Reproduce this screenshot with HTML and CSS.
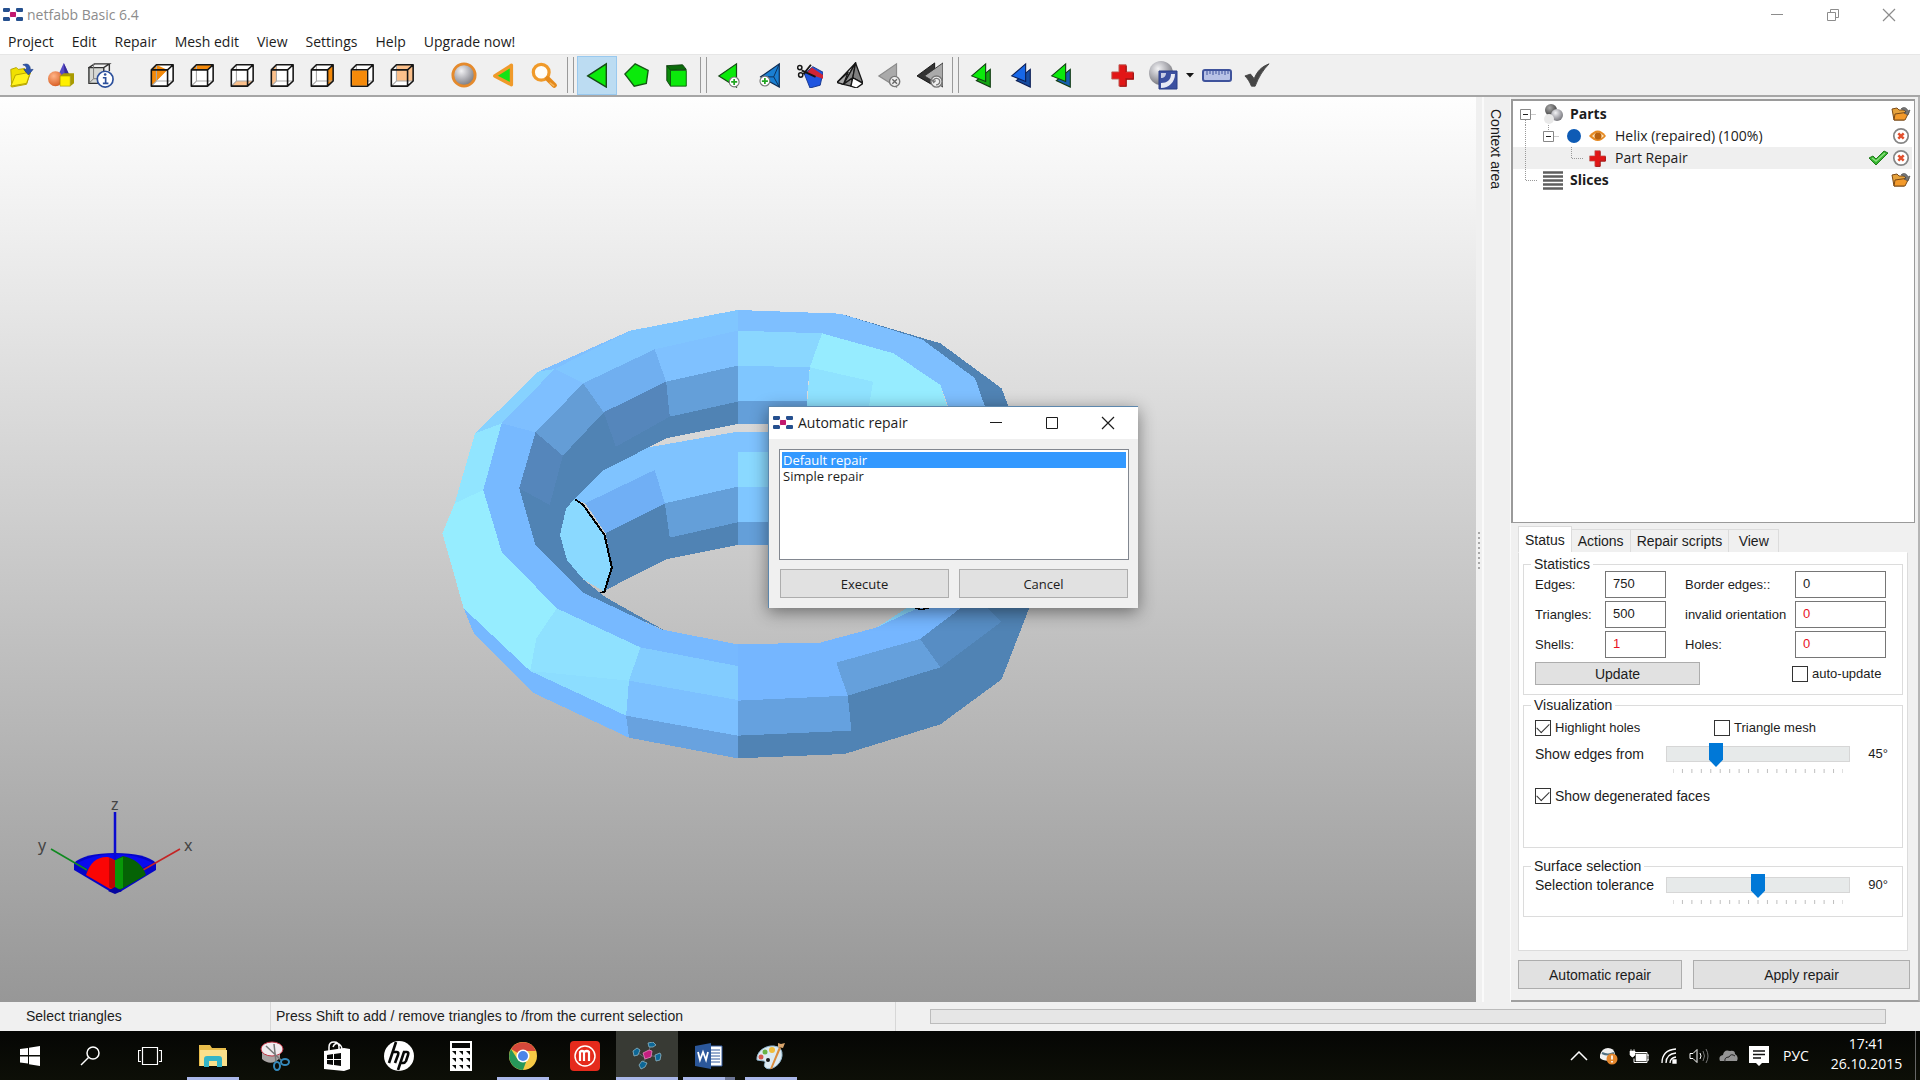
FILE: index.html
```html
<!DOCTYPE html>
<html lang="en">
<head>
<meta charset="utf-8">
<title>netfabb Basic 6.4</title>
<link rel="stylesheet" href="styles.css">
</head>
<body>
<svg class="defs" aria-hidden="true">
  <defs>
    <radialGradient id="grey-ball" cx=".38" cy=".32" r=".7"><stop offset="0" stop-color="#f2f2f4"/><stop offset=".5" stop-color="#b4b4ba"/><stop offset="1" stop-color="#77777c"/></radialGradient>
    <radialGradient id="dark-ball" cx=".38" cy=".32" r=".7"><stop offset="0" stop-color="#aaa"/><stop offset="1" stop-color="#3c3c3c"/></radialGradient>
    <radialGradient id="orange-ball" cx=".38" cy=".32" r=".7"><stop offset="0" stop-color="#ffb487"/><stop offset="1" stop-color="#d95f25"/></radialGradient>
    <symbol id="logo" viewBox="0 0 20 14"><g fill="#25508f"><rect x="0" y="0" width="7" height="4" rx="1"/><rect x="13" y="0" width="7" height="4" rx="1"/><rect x="0" y="9" width="7" height="4" rx="1"/><rect x="13" y="9" width="7" height="4" rx="1"/></g><path d="M6 3l8 7M14 3l-8 7" stroke="#d9a0c4"/><rect x="7" y="4" width="6" height="5" rx="1" fill="#c2186f"/></symbol>
    <symbol id="cube" viewBox="0 0 28 28"><path d="M8 3v17.500h18M8 20.500L2.500 26" fill="none" stroke="#a9a9a9" stroke-width="1.200"/><path d="M2.500 8.500h17.500V26H2.500zM2.500 8.500L8 3h18l-6 5.500M26 3v17.500L20 26" fill="none" stroke="#161616" stroke-width="1.700" stroke-linejoin="round"/></symbol>
    <symbol id="cross" viewBox="0 0 26 26"><path d="M9 1h8v8h8v8h-8v8H9v-8H1V9h8z" fill="#e21616" stroke="#b96058" stroke-width="1"/><path d="M17 2v7M25 10v7h-8v8H10" fill="none" stroke="#a50c0c" stroke-width="1.500"/></symbol>
    <symbol id="plus-badge" viewBox="0 0 14 14"><circle cx="7" cy="7" r="5.700" fill="#fff" stroke="#777" stroke-width="1.300"/><path d="M7 3.500v7M3.500 7h7" stroke="#20a520" stroke-width="2"/></symbol>
    <symbol id="folder-open" viewBox="0 0 20 16"><path d="M1 3l5-1 2 2h6l1 3-2 7H3z" fill="#e6a23c" stroke="#7b4a16"/><path d="M4 8l14-2-4 8H3z" fill="#f39a2b" stroke="#7b4a16"/><path d="M10 3c3-3 6-1 7 2l2-1-2 5-4-2 2-1c-1-2-2-2-5-3" fill="#777" stroke="#444" stroke-width=".6"/></symbol>
    <symbol id="remove" viewBox="0 0 18 18"><circle cx="9" cy="9" r="7.200" fill="#fff" stroke="#858585" stroke-width="1.700"/><path d="M6.300 6.300l5.400 5.400M11.700 6.300l-5.400 5.400" stroke="#e2502e" stroke-width="2.500"/></symbol>
    <symbol id="ticks" viewBox="0 0 180 4" preserveAspectRatio="none"><path d="M0 0v4M10 0v4M20 0v4M30 0v4M40 0v4M50 0v4M60 0v4M70 0v4M80 0v4M90 0v4M100 0v4M110 0v4M120 0v4M130 0v4M140 0v4M150 0v4M160 0v4M170 0v4M180 0v4" stroke="#bdbdbd"/></symbol>
    <symbol id="min" viewBox="0 0 14 14"><path d="M1 6.500h12" stroke="currentColor"/></symbol>
    <symbol id="close" viewBox="0 0 14 14"><path d="M1 1l12 12M13 1L1 13" stroke="currentColor" stroke-width="1.200"/></symbol>
  </defs>
</svg>

<header class="titlebar">
  <svg class="logo" width="20" height="14"><use href="#logo"/></svg>
  <h1>netfabb Basic 6.4</h1>
  <div class="window-buttons">
    <button aria-label="Minimize"><svg width="14" height="14"><use href="#min"/></svg></button>
    <button aria-label="Restore"><svg width="14" height="14" viewBox="0 0 14 14" fill="none" stroke="currentColor"><path d="M1.500 4.500h8v8h-8zM4.500 4v-2.500h8v8H10"/></svg></button>
    <button aria-label="Close"><svg width="14" height="14"><use href="#close"/></svg></button>
  </div>
</header>

<nav class="menubar">
  <button>Project</button><button>Edit</button><button>Repair</button><button>Mesh edit</button><button>View</button><button>Settings</button><button>Help</button><button>Upgrade now!</button>
</nav>

<div class="toolbar" role="toolbar" aria-label="Tools">
  <div class="tools">
    <button aria-label="Open project"><svg viewBox="0 0 28 28"><path d="M3 8l6-2 2 2 7-1 1 4 5 1-4 12-16 3z" fill="#f0e000" stroke="#b3a100"/><path d="M3 26l5-12 16-3-4 12z" fill="#fff31c" stroke="#b3a100"/><path d="M16 3c5-2 8 0 8 5h3l-5 6-5-6h3c0-3-1-4-4-5" fill="#2c55b0" stroke="#1c3a80" stroke-width=".7"/></svg></button>
    <button aria-label="Add part"><svg viewBox="0 0 28 28"><path d="M17 1l6 13H11z" fill="#574bc7"/><path d="M17 1l6 13h-5z" fill="#3a2d98"/><circle cx="8" cy="18" r="8" fill="url(#orange-ball)"/><path d="M13 15h11v11H13z" fill="#fff000" stroke="#8e8400" stroke-width=".6"/><path d="M13 15l4-3h11l-4 3zM24 26l4-3V12l-4 3z" fill="#a99b00"/></svg></button>
    <button aria-label="Part information"><svg viewBox="0 0 28 28"><path d="M1 6h16v17H1z" fill="#d6d8d4"/><path d="M1 6l6-4h16l-6 4zM1 6h16v17H1zM23 2v8" fill="none" stroke="#333" stroke-width="1.500"/><path d="M6 2v16L1 23M6 18h9" fill="none" stroke="#777"/><circle cx="18.500" cy="18.500" r="8.500" fill="#fff" stroke="#2b4f9b" stroke-width="1.800"/><path d="M16 17h3v6M16 23h6" fill="none" stroke="#2b4f9b" stroke-width="1.800"/><circle cx="18.500" cy="13.500" r="1.400" fill="#2b4f9b"/></svg></button>
  </div>
  <div class="tools">
    <button aria-label="Isometric view"><svg viewBox="0 0 28 28"><path d="M8 3h18l-6 5.500h0L2.500 26V8.500z" fill="#f58a0a"/><path d="M8 3h18l-6 5.500z" fill="#fff"/><path d="M26 3v17.500L20 26H3L20 8.500z" fill="#fff"/><use href="#cube"/></svg></button>
    <button aria-label="Top view"><svg viewBox="0 0 28 28"><path d="M2.500 8.500h17.500L26 3v17.500L20 26H2.500z" fill="#fff"/><path d="M2.500 8.500L8 3h18l-6 5.500z" fill="#f58a0a"/><use href="#cube"/></svg></button>
    <button aria-label="Bottom view"><svg viewBox="0 0 28 28"><path d="M2.500 8.500L8 3h18v17.500L20 26H2.500z" fill="#fff"/><path d="M2.500 26L8 20.500h18L20 26z" fill="#fbc08b"/><use href="#cube"/></svg></button>
    <button aria-label="Left view"><svg viewBox="0 0 28 28"><path d="M2.500 8.500L8 3h18v17.500L20 26H2.500z" fill="#fff"/><path d="M2.500 8.500L8 3v17.500L2.500 26z" fill="#fbc08b"/><use href="#cube"/></svg></button>
    <button aria-label="Right view"><svg viewBox="0 0 28 28"><path d="M2.500 8.500L8 3h18v17.500L20 26H2.500z" fill="#fff"/><path d="M20 8.500L26 3v17.500L20 26z" fill="#f58a0a"/><use href="#cube"/></svg></button>
    <button aria-label="Front view"><svg viewBox="0 0 28 28"><path d="M2.500 8.500L8 3h18v17.500L20 26H2.500z" fill="#fff"/><use href="#cube"/><path d="M3.300 9.300h16v16h-16z" fill="#f58a0a"/></svg></button>
    <button aria-label="Back view"><svg viewBox="0 0 28 28"><path d="M2.500 8.500L8 3h18v17.500L20 26H2.500z" fill="#fff"/><path d="M8 3h18v17.500H8z" fill="#fbc08b"/><use href="#cube"/></svg></button>
  </div>
  <div class="tools wide-gap">
    <button aria-label="Zoom to all"><svg viewBox="0 0 28 28"><circle cx="14" cy="14" r="12" fill="url(#grey-ball)" stroke="#e58a2c" stroke-width="3"/></svg></button>
    <button aria-label="Zoom to selection"><svg viewBox="0 0 28 28"><path d="M4 15L22 3.500v21z" fill="#15e315" stroke="#f09a2a" stroke-width="3.600" stroke-linejoin="round"/></svg></button>
    <button aria-label="Zoom"><svg viewBox="0 0 28 28"><circle cx="11" cy="11" r="8.500" fill="#fffdf8" stroke="#f09a2a" stroke-width="3.500"/><path d="M18 18l7 7" stroke="#e58a1c" stroke-width="5.500" stroke-linecap="round"/><path d="M20 22l5 4" stroke="#f6b65c" stroke-width="1.500"/></svg></button>
  </div>
  <div class="separator"></div>
  <div class="tools">
    <button class="pressed" aria-pressed="true" aria-label="Select triangles"><svg viewBox="0 0 28 28"><path d="M4 15L24 2v25z" fill="#0bea0b" stroke="#164b16" stroke-width="1.500"/></svg></button>
    <button aria-label="Select surfaces"><svg viewBox="0 0 28 28"><path d="M12 2l14 7-2 14-13 3L1 13z" fill="#0bea0b" stroke="#145814" stroke-width="1.500"/></svg></button>
    <button aria-label="Select shells"><svg viewBox="0 0 28 28"><path d="M3 4l17-1 4 5-17 1z" fill="#0a6b0a" stroke="#0d420d"/><path d="M3 4l4 5v17l-4-6z" fill="#0a8a0a" stroke="#0d420d"/><path d="M7 9h17v17H7z" fill="#0bea0b" stroke="#0d5a0d"/></svg></button>
  </div>
  <div class="separator"></div>
  <div class="tools">
    <button aria-label="Add triangle"><svg viewBox="0 0 28 28"><path d="M2 15L21 2v25z" fill="#0bea0b" stroke="#164b16" stroke-width="1.300"/><use href="#plus-badge" x="12" y="15" width="13" height="13"/></svg></button>
    <button aria-label="Add node"><svg viewBox="0 0 28 28"><path d="M4 16L24 2v25z" fill="#1a7fd2" stroke="#0d2d55" stroke-width="1.300"/><path d="M24 2l-6 14 6 11M4 16h14" fill="none" stroke="#0d2d55"/><use href="#plus-badge" x="2" y="14" width="13" height="13"/></svg></button>
    <button aria-label="Cut surface"><svg viewBox="0 0 28 28"><path d="M8 13l9-8 11 6-3 14-11 3z" fill="#1f55e0" stroke="#15348a"/><path d="M10 12l6-6 12 8v4z" fill="#cf2436"/><path d="M5 9l15 7M7 13l8-10" stroke="#161616" stroke-width="2"/><circle cx="3" cy="6" r="2.300" fill="none" stroke="#161616" stroke-width="1.600"/><circle cx="4" cy="14" r="2.300" fill="none" stroke="#161616" stroke-width="1.600"/></svg></button>
    <button aria-label="Triangle mesh"><svg viewBox="0 0 28 28"><g stroke="#161616" stroke-width="1.400" stroke-linejoin="round"><path d="M20 1L0 22l7 2z" fill="#ddd"/><path d="M20 1L7 24l10-7z" fill="#8a8a8a"/><path d="M20 1l8 22-11-6z" fill="#808080"/><path d="M0 22l12-11-5 13z" fill="#aaa"/><path d="M7 24l10-7-2 9z" fill="#888"/><path d="M15 26l2-9 11 6-7 5z" fill="#fff"/></g></svg></button>
    <button aria-label="Remove triangles"><svg viewBox="0 0 28 28"><path d="M2 15L21 2v25z" fill="#aaa" stroke="#8b8b8b" stroke-width="1.300"/><circle cx="19" cy="21" r="5.500" fill="#eee" stroke="#777" stroke-width="1.500"/><path d="M16.500 18.500l5 5M21.500 18.500l-5 5" stroke="#666" stroke-width="1.500"/></svg></button>
    <button aria-label="Flip triangles"><svg viewBox="0 0 28 28"><path d="M0 15L19 1v25z" fill="#333" stroke="#111"/><path d="M8 15L28 1v26z" fill="#aaa" stroke="#333"/><circle cx="21" cy="21" r="6" fill="#eee" stroke="#777" stroke-width="1.500"/><path d="M17.500 21a3.500 3.500 0 1 1 3 3.500M16 19l2 3 2-2" fill="none" stroke="#777" stroke-width="1.400"/></svg></button>
  </div>
  <div class="separator tight"></div>
  <div class="tools">
    <button aria-label="Select all"><svg viewBox="0 0 28 28"><g stroke="#123c12" stroke-width="1.200"><path d="M9 20L24 8v19z" fill="#13a613"/><path d="M4 15L19 2v19z" fill="#0bea0b"/></g></svg></button>
    <button aria-label="Invert selection"><svg viewBox="0 0 28 28"><g stroke="#0c1e55" stroke-width="1.200"><path d="M9 20L24 8v19z" fill="#174ca0"/><path d="M4 15L19 2v19z" fill="#1767e8"/></g></svg></button>
    <button aria-label="Toggle selection"><svg viewBox="0 0 28 28"><g stroke="#123c12" stroke-width="1.200"><path d="M9 20L24 8v19z" fill="#165fae"/><path d="M4 15L19 2v19z" fill="#0bea0b"/></g></svg></button>
  </div>
  <div class="tools wide-gap">
    <button aria-label="Repair part"><svg viewBox="0 0 28 28"><use href="#cross" x="1" y="2" width="25" height="25"/></svg></button>
    <button aria-label="Cut part"><svg viewBox="0 0 30 30" class="large"><circle cx="13" cy="13" r="12" fill="url(#grey-ball)"/><path d="M11 11h18v18H11z" fill="#3c50a0" stroke="#293c87"/><path d="M13 28c8 0 14-6 14-14h-4c0 6-4 9-10 9z" fill="#e7e9f4"/><path d="M13 13h5c0 3-2 5-5 5z" fill="#c8cde4"/></svg></button>
    <button class="caret" aria-label="Cut options"><svg viewBox="0 0 10 6"><path d="M1 1h8L5 5.500z" fill="#151515"/></svg></button>
    <button aria-label="Measure"><svg viewBox="0 0 30 28" class="large"><rect x="1" y="9" width="28" height="11" rx="2" fill="#b8c2e6" stroke="#3f539c" stroke-width="2"/><path d="M5 10v4M8 10v3M11 10v4M14 10v3M17 10v4M20 10v3M23 10v4M26 10v3" stroke="#3f539c"/></svg></button>
    <button aria-label="Accept"><svg viewBox="0 0 28 28"><path d="M1 15l6-2 4 5C14 10 19 5 27 2 20 9 16 16 12 26H8C6 21 4 18 1 15z" fill="#464646" stroke="#464646" stroke-linejoin="round"/></svg></button>
  </div>
</div>

<main class="workspace">
  <section class="viewport" aria-label="3D view">
    <svg class="model" viewBox="0 0 1568 1470" preserveAspectRatio="none" shape-rendering="crispEdges">
      <!-- lower turn, seen through the ring -->
      <g fill="#7fc3ff"><path d="M447 543L560 472L778 425H870V487H778L575 540L405 640L378 628z"/><path d="M575 540L778 487V590L600 640z"/></g>
      <path d="M778 487h92v103h-92z" fill="#8ad9ff"/><path d="M778 590h92v107h-92z" fill="#7fc6ff"/><path d="M778 697h92v68h-92z" fill="#649fd9"/>
      <path d="M405 640L575 540L600 640L455 730z" fill="#70aff5"/>
      <path d="M600 640L778 590V697L612 743z" fill="#649fd9"/>
      <path d="M455 730L600 640L612 743L778 697V765L603 808L455 900L470 832z" fill="#5083b4"/>
      <!-- inner wall of the upper turn -->
      <path d="M283 427L350 497L450 367L603 275L612 380L778 335V402L603 445L447 543L378 628L358 655L343 735L360 810L400 868L455 922L600 1022L400 912L280 770L240 595z" fill="#5083b4"/>
      <path d="M450 367L603 275L612 380L480 470zM350 497L318 645L243 595L283 427z" fill="#5586bb"/>
      <path d="M283 427L400 280L450 367L350 497z" fill="#649dd6"/>
      <path d="M400 280L575 178L603 275L450 367z" fill="#70aff0"/>
      <path d="M575 178L778 122V227L603 275z" fill="#7fc1ff"/>
      <path d="M603 275L778 227V335L612 380z" fill="#649fd9"/>
      <path d="M778 122L985 130L955 232L778 227z" fill="#8ad7ff"/>
      <path d="M778 227L955 232L947 334L778 332z" fill="#7fc6ff"/>
      <path d="M778 332L947 334L960 402H778z" fill="#649fd9"/>
      <path d="M985 130L1160 190L1275 285L1297 370H1097L1110 275L955 232z" fill="#96ecff"/>
      <path d="M955 232L1110 275L1097 370H947z" fill="#8fe2ff"/>
      <!-- crest of the upper turn -->
      <path d="M515 122L778 60L1030 71L1230 148L1360 265L1390 370H1300L1275 285L1160 190L985 130L778 122L575 178L400 280L283 427L243 595L283 765L400 908L590 1018L778 1063V1130L540 1074L335 957L200 787L155 600L200 400L290 245z" fill="#7ebfff"/>
      <path d="M200 400L283 427L243 595L283 765L400 908L590 1018L778 1063V1130L540 1074L335 957L200 787L155 600z" fill="#77b9ff"/>
      <path d="M515 122L778 60V122L575 178L400 280L330 237z" fill="#80c6ff"/>
      <path d="M1030 71L1275 160L1425 295L1448 370H1390L1360 265L1230 148z" fill="#5083b4"/>
      <!-- outer left wall -->
      <path d="M290 245L330 237L200 400L135 430z" fill="#86d2ff"/>
      <path d="M135 430L200 400L155 600L85 640z" fill="#91e5ff"/>
      <path d="M85 640L155 600L200 785L335 955L285 1045L270 1143L107 955L55 730z" fill="#96edff"/>
      <path d="M335 955L540 1072L512 1172L505 1277L270 1143L285 1045z" fill="#8cddff"/>
      <path d="M285 1045L335 955L540 1072L512 1172L270 1143z" fill="#91e4ff" opacity=".6"/>
      <path d="M540 1072L778 1128V1230L512 1172z" fill="#82ccff"/>
      <path d="M512 1172L778 1230V1337L505 1277z" fill="#7cc0ff"/>
      <path d="M505 1277L778 1337V1405L512 1343z" fill="#68a2df"/>
      <path d="M270 1143L505 1277L512 1343L280 1210zM107 955L270 1143L280 1210L132 1030z" fill="#76b8ff"/>
      <!-- lower right wall -->
      <path d="M1120 1012L1210 940H1260L1225 985z" fill="#8ad9ff"/>
      <path d="M778 1063L980 1058L1120 1012L1175 980L1245 940H1350L1225 1047L1020 1118L1048 1217L778 1232z" fill="#75b6ff"/>
      <path d="M1225 1047L1340 940H1380L1425 995L1275 1132z" fill="#578dc4"/>
      <path d="M1020 1118L1225 1047L1275 1132L1048 1217z" fill="#65a0dc"/>
      <path d="M1048 1217L1275 1132L1425 995L1380 940H1497L1425 1168L1275 1303L1040 1392L778 1405V1337L1057 1322z" fill="#5083b4"/>
      <path d="M778 1232L1048 1217L1057 1322L778 1337z" fill="#65a1df"/>
      <!-- open end with its highlighted border -->
      <path d="M378 628L400 645L452 735L470 832L452 905L400 868L360 810L343 735L358 655z" fill="#8ad9ff"/>
      <path d="M380 628L400 645L452 735L470 832L452 905L442 908" fill="none" stroke="#000" stroke-width="5"/>
      <path d="M1212 953L1228 959L1250 953" fill="none" stroke="#000" stroke-width="4"/>
    </svg>
    <svg class="axes" viewBox="0 0 300 130" width="300" height="130">
      <path d="M74 83Q84 73 115 73T156 83V90L120 112H111L74 90z" fill="#0505c8"/>
      <path d="M77 83Q95 74 115 74T153 83L125 96H100z" fill="#0a0aee"/>
      <path d="M51 69L87 90" stroke="#108a20" stroke-width="1.600"/><path d="M180 69L143 90" stroke="#c42424" stroke-width="1.600"/>
      <path d="M86 95Q92 76 108 77L115 80V109L110 109z" fill="#fa0505"/><path d="M109 78l6 2v30l-6-3z" fill="#bb0606"/>
      <path d="M115 80L123 76Q141 80 146 95L120 110L115 109z" fill="#056305"/><path d="M115 80l8-3v31l-8 2z" fill="#089808"/>
      <path d="M108 111l7-4 7 4-7 3z" fill="#0505a0"/>
      <path d="M115 32V80" stroke="#0b0bd0" stroke-width="2.500"/>
      <text x="111" y="30">z</text><text x="38" y="71">y</text><text x="184" y="71">x</text>
    </svg>

    <div class="dialog" role="dialog" aria-labelledby="dialog-title">
      <div class="dialog-title">
        <svg width="20" height="14"><use href="#logo"/></svg>
        <h2 id="dialog-title">Automatic repair</h2>
        <div class="window-buttons">
          <button aria-label="Minimize"><svg width="14" height="14"><use href="#min"/></svg></button>
          <button aria-label="Maximize"><svg width="14" height="14" viewBox="0 0 14 14"><path d="M1.500 1.500h11v11h-11z" fill="none" stroke="currentColor"/></svg></button>
          <button aria-label="Close"><svg width="14" height="14"><use href="#close"/></svg></button>
        </div>
      </div>
      <div class="dialog-body">
        <select size="6" aria-label="Repair script"><option class="chosen">Default repair</option><option>Simple repair</option></select>
        <div class="dialog-actions"><button class="push">Execute</button><button class="push">Cancel</button></div>
      </div>
    </div>
  </section>

  <div class="splitter"><svg width="4" height="38" viewBox="0 0 4 38"><path d="M2 1v37" stroke="#a8a8a8" stroke-width="2" stroke-dasharray="2 3"/></svg></div>
  <div class="context-strip"><span>Context area</span></div>

  <aside class="sidebar">
    <ul class="tree">
      <li class="node"><button class="guide" aria-label="Collapse Parts"><svg width="30" height="22" viewBox="0 0 30 22"><path d="M17.500 11.500h6M12.500 17v5" stroke="#999" stroke-dasharray="1 1"/><path d="M7.500 6.500h10v10h-10z" fill="#fff" stroke="#888"/><path d="M10 11.500h5" stroke="#222"/></svg></button>
        <svg class="kind" viewBox="0 0 20 20"><circle cx="8" cy="6" r="6" fill="url(#dark-ball)"/><circle cx="14" cy="11" r="6" fill="url(#grey-ball)"/><circle cx="6" cy="15" r="5" fill="#e9e9e9"/></svg>
        <strong>Parts</strong><button class="mini" aria-label="Open part"><svg width="20" height="16"><use href="#folder-open"/></svg></button></li>
      <li class="node"><button class="guide" aria-label="Collapse Helix"><svg width="52" height="22" viewBox="0 0 52 22"><path d="M12.500 0v22M40.500 11.500h6M35.500 0v6" stroke="#999" stroke-dasharray="1 1"/><path d="M30.500 6.500h10v10h-10z" fill="#fff" stroke="#888"/><path d="M33 11.500h5" stroke="#222"/></svg></button>
        <svg class="kind" viewBox="0 0 20 20"><circle cx="9" cy="10" r="7" fill="#0e5bb5"/></svg>
        <svg class="kind" viewBox="0 0 20 20"><path d="M1 10Q10-1 18 10Q10 20 1 10z" fill="#e68a22"/><path d="M4 10Q10 3 16 10Q10 16 4 10z" fill="#ffe3b8"/><circle cx="10" cy="10" r="3.500" fill="#b8620f"/></svg>
        <span>Helix (repaired) (100%)</span><button class="mini" aria-label="Remove Helix"><svg width="18" height="18"><use href="#remove"/></svg></button></li>
      <li class="node selected"><svg class="guide" width="75" height="22" viewBox="0 0 75 22"><path d="M12.500 0v22M58.500 0v11.500h12" fill="none" stroke="#999" stroke-dasharray="1 1"/></svg>
        <svg class="kind" viewBox="0 0 20 20"><use href="#cross" x="1" y="2" width="17" height="17"/></svg>
        <span>Part Repair</span><button class="mini" aria-label="Apply"><svg width="20" height="18" viewBox="0 0 20 18"><path d="M1 9l4-2 3 3 8-8 4 2L8 16z" fill="#35b52e" stroke="#217a1c"/><path d="M4 9l4 3 9-8" fill="none" stroke="#8be07f" stroke-width="1.500"/></svg></button><button class="mini close-up" aria-label="Cancel repair"><svg width="18" height="18"><use href="#remove"/></svg></button></li>
      <li class="node"><svg class="guide" width="30" height="22" viewBox="0 0 30 22"><path d="M12.500 0v11.500h12" fill="none" stroke="#999" stroke-dasharray="1 1"/></svg>
        <svg class="kind" viewBox="0 0 20 20"><path d="M0 2.500h20M0 6.500h20M0 10.500h20M0 14.500h20M0 18.500h20" stroke="#5e5e5e" stroke-width="2.500"/></svg>
        <strong>Slices</strong><button class="mini" aria-label="Open slices"><svg width="20" height="16"><use href="#folder-open"/></svg></button></li>
    </ul>

    <div class="panel">
      <div class="tabs" role="tablist">
        <button role="tab" aria-selected="true" class="tab active">Status</button><button role="tab" class="tab">Actions</button><button role="tab" class="tab">Repair scripts</button><button role="tab" class="tab">View</button>
      </div>
      <div class="page">
        <fieldset class="statistics"><legend>Statistics</legend>
          <div class="stats">
            <label for="edges">Edges:</label><input id="edges" value="750">
            <label class="second" for="border">Border edges::</label><input id="border" value="0">
            <label for="triangles">Triangles:</label><input id="triangles" value="500">
            <label class="second" for="invalid">invalid orientation</label><input id="invalid" class="alert" value="0">
            <label for="shells">Shells:</label><input id="shells" class="alert" value="1">
            <label class="second" for="holes">Holes:</label><input id="holes" class="alert" value="0">
          </div>
          <div class="update-row"><button class="push">Update</button><label class="check">
            <input type="checkbox">auto-update</label></div>
        </fieldset>
        <fieldset class="visualization"><legend>Visualization</legend>
          <div class="checks"><label class="check"><input type="checkbox" checked>Highlight holes</label><label class="check"><input type="checkbox">Triangle mesh</label></div>
          <div class="slider-row"><label for="angle">Show edges from</label><div class="slider"><input id="angle" type="range" min="0" max="180" value="45"><svg class="ticks"><use href="#ticks"/></svg></div><output for="angle">45°</output></div>
          <label class="check faces"><input type="checkbox" checked>Show degenerated faces</label>
        </fieldset>
        <fieldset class="surface"><legend>Surface selection</legend>
          <div class="slider-row"><label for="tolerance">Selection tolerance</label><div class="slider"><input id="tolerance" type="range" min="0" max="180" value="90"><svg class="ticks"><use href="#ticks"/></svg></div><output for="tolerance">90°</output></div>
        </fieldset>
      </div>
      <div class="panel-actions"><button class="push">Automatic repair</button><button class="push">Apply repair</button></div>
    </div>
  </aside>
</main>

<footer class="statusbar">
  <span class="mode">Select triangles</span><span class="hint">Press Shift to add / remove triangles to /from the current selection</span><div class="progress" role="progressbar"></div>
</footer>

<nav class="taskbar" aria-label="Taskbar">
  <button aria-label="Start"><svg width="20" height="20" viewBox="0 0 20 20"><path d="M0 3l8-1v7H0zM9 1.800L20 0v9H9zM0 10.500h8v7l-8-1zM9 10.500h11V20L9 18.200z" fill="#fff"/></svg></button>
  <button aria-label="Search"><svg width="20" height="20" viewBox="0 0 20 20"><circle cx="13" cy="7" r="6" fill="none" stroke="#fff" stroke-width="1.500"/><path d="M8.500 11.500L1 19" stroke="#fff" stroke-width="1.500"/></svg></button>
  <button aria-label="Task view"><svg width="24" height="18" viewBox="0 0 24 18"><path d="M4.500.500h15v17h-15zM3 3.500H.500v11H3M21 3.500h2.500v11H21" fill="none" stroke="#fff" stroke-width="1.200"/></svg></button>
  <div class="apps">
  <button class="app running" aria-label="File Explorer"><svg width="28" height="24" viewBox="0 0 28 24"><path d="M0 1h11l2 3h14v18H0z" fill="#e8bd4b"/><path d="M1 6h27v16H1z" fill="#fbe08b"/><path d="M5 23v-8q0-3 3-3h12q3 0 3 3v8h-5v-6h-8v6z" fill="#35b5c8"/></svg></button>
  <button class="app" aria-label="Snipping Tool"><svg width="30" height="30" viewBox="0 0 30 30"><path d="M2 9v9q9 8 18-1V9z" fill="#a9a4a4"/><ellipse cx="12" cy="8" rx="11" ry="7" fill="#f1ecef" stroke="#c23545" stroke-width="1"/><path d="M6 5l15 14M14 3l2 18" stroke="#777" stroke-width="1.500"/><ellipse cx="25" cy="21" rx="4" ry="3" fill="none" stroke="#3589bb" stroke-width="2"/><ellipse cx="17" cy="25" rx="3" ry="4" fill="none" stroke="#3589bb" stroke-width="2"/></svg></button>
  <button class="app" aria-label="Store"><svg width="28" height="30" viewBox="0 0 28 30"><path d="M6 10V6q0-5 5-5t5 5v4M10 6q2-5 6-3 3 2 3 6" fill="none" stroke="#fff" stroke-width="1.500"/><path d="M1 10l20-3 6 1v20l-6 2-20-2z" fill="#fff"/><path d="M4 14l6-1v5H4zM11 13l7-1v6h-7zM4 19h6v5l-6-1zM11 19h7v6l-7-1z" fill="#080908"/></svg></button>
  <button class="app" aria-label="HP"><svg width="30" height="30" viewBox="0 0 30 30"><circle cx="15" cy="15" r="15" fill="#fff"/><path d="M12 1L5 22M9 11h4q2 0 1 3l-3 8M20 11L14 29M19 11h4q2 0 1 3l-2 6q-1 2-3 2h-3" fill="none" stroke="#080908" stroke-width="2.600"/></svg></button>
  <button class="app" aria-label="Calculator"><svg width="22" height="30" viewBox="0 0 22 30"><path d="M0 0h22v30H0z" fill="#fff"/><path d="M2 2h18v5H2zM2 10h4v4zM9 10h4v4zM16 10h4v4zM2 17h4v4zM9 17h4v4zM16 17h4v4zM2 24h4v4zM9 24h4v4zM16 24h4v4z" fill="#080908"/></svg></button>
  <button class="app running" aria-label="Chrome"><svg width="28" height="28" viewBox="0 0 28 28"><circle cx="14" cy="14" r="14" fill="#f6c945"/><path d="M14 14L2 7a14 14 0 0 1 25 2H14z" fill="#d6493b"/><path d="M14 28A14 14 0 0 1 2 7l7 11 8 2z" fill="#27985a"/><circle cx="14" cy="14" r="6.500" fill="#fff"/><circle cx="14" cy="14" r="5" fill="#4c84e8"/></svg></button>
  <button class="app" aria-label="MakerBot"><svg width="30" height="30" viewBox="0 0 30 30"><rect width="30" height="30" rx="4" fill="#e52a1c"/><circle cx="15" cy="15" r="10" fill="none" stroke="#fff" stroke-width="1.500"/><path d="M10 20v-9q2-2 4 0v9m0-9q3-2 5 0v9" fill="none" stroke="#fff" stroke-width="2.200"/></svg></button>
  <button class="app running current" aria-label="netfabb"><svg width="30" height="28" viewBox="0 0 30 28"><path d="M5 10l8 6M25 15l-8-2M18 5l-1 5M11 21l2-5" stroke="#5f6a6d"/><g fill="#0d6796" stroke="#8eb5c4" stroke-width=".8"><path d="M16 1l5-1 3 3-3 2-4 0z"/><path d="M1 9l4-3 3 2-2 5-4 1z"/><path d="M23 13l5-2 1 2-1 5-4 1z"/><path d="M7 23l3-4 5 2-2 4-4 2z"/></g><path d="M11 11l6-3 3 1-1 6-6 2z" fill="#c51f80" stroke="#e58abf" stroke-width=".8"/></svg></button>
  <button class="app running grouped" aria-label="Word"><svg width="28" height="26" viewBox="0 0 28 26"><path d="M14 3h13v20H14z" fill="#fff" stroke="#335a9f"/><path d="M16 7h9M16 10h9M16 13h9M16 16h9M16 19h9" stroke="#335a9f"/><path d="M0 3l16-3v26L0 23z" fill="#2b579a"/><path d="M3 9l2 8 3-8 3 8 2-8" fill="none" stroke="#fff" stroke-width="1.800"/></svg></button>
  <button class="app running" aria-label="Paint"><svg width="30" height="28" viewBox="0 0 30 28"><path d="M1 18C0 10 9 3 18 4q9 1 8 10c-1 9-11 15-16 12-4-3 1-6-2-7z" fill="#dceaf3" stroke="#94b8ce"/><circle cx="5" cy="15" r="2.500" fill="#d65a4e"/><circle cx="9" cy="10" r="2.500" fill="#69b345"/><circle cx="16" cy="8" r="3" fill="#f0bd3c"/><circle cx="12" cy="18" r="2" fill="#171717"/><path d="M23 5l2 1-9 21-2 0z" fill="#d98b3d"/><path d="M22 5V1l3 1 4-1-2 5z" fill="#d8a56d"/></svg></button>
  </div>
  <div class="tray">
    <button aria-label="Show hidden icons"><svg width="18" height="10" viewBox="0 0 18 10"><path d="M1 9l8-8 8 8" fill="none" stroke="#fff" stroke-width="1.500"/></svg></button>
    <button aria-label="Security"><svg width="20" height="18" viewBox="0 0 20 18"><path d="M1 8q2-7 8-7t7 6l-2 6Q5 15 1 11z" fill="#f1f1f1"/><path d="M3 6q6 3 12 0" fill="none" stroke="#527080" stroke-width="2"/><circle cx="13" cy="12" r="5.500" fill="#e3862c"/><path d="M13 8.500v4M13 14v1.500" stroke="#fff" stroke-width="1.700"/></svg></button>
    <button aria-label="Battery"><svg width="20" height="14" viewBox="0 0 20 14"><path d="M5 3.500h13v10H5v-4M18 6h2v5h-2" fill="none" stroke="#fff"/><path d="M7 5h10v7H7zM1 2h5v4L4 8H3L1 6zM2 0v2M5 0v2" fill="#fff" stroke="#fff" stroke-width=".6"/></svg></button>
    <button aria-label="Network"><svg width="16" height="16" viewBox="0 0 16 16" fill="none" stroke="#fff" stroke-width="1.300"><path d="M1 15Q1 2 15 1M5 15Q5 6 15 5M9 15q0-5 6-6"/><path d="M12 12h3v3h-3z" fill="#fff"/></svg></button>
    <button aria-label="Volume"><svg width="20" height="16" viewBox="0 0 20 16" fill="none" stroke="#fff"><path d="M1 5.500h3l4-4v13l-4-4H1z"/><path d="M11 5q2 3 0 6"/><path d="M14 3q3 5 0 10M17 1q4 7 0 14" stroke="#777"/></svg></button>
    <button aria-label="OneDrive"><svg width="20" height="14" viewBox="0 0 20 14"><path d="M1 12Q-1 7 4 6q1-6 7-4 5-1 5 3 4 2 2 7z" fill="#949494"/><path d="M6 13q-1-5 4-5 2-4 6-1" fill="none" stroke="#222"/></svg></button>
    <button aria-label="Notifications"><svg width="20" height="20" viewBox="0 0 20 20"><path d="M0 0h20v17h-7l-3 3-3-3H0z" fill="#fff"/><path d="M4 5h12M4 8.500h12M4 12h8" stroke="#111" stroke-width="1.300"/></svg></button>
    <button class="language">РУС</button>
    <time datetime="2015-10-26T17:41">17:41<br>26.10.2015</time>
    <button class="show-desktop" aria-label="Show desktop"></button>
  </div>
</nav>
</body>
</html>
```
FILE: styles.css
```css
* { box-sizing: border-box; }
body {
  margin: 0;
  min-height: 100vh;
  display: flex;
  flex-direction: column;
  background: #f0f0f0;
  color: #1c1c1c;
  font: 14px/16px "Liberation Sans", Arial, sans-serif;
}
button, input, select { font: inherit; color: inherit; margin: 0; }
button { border: 0; padding: 0; background: none; }
svg { display: block; flex: none; }
h1, h2 { margin: 0; font-weight: 400; }
.defs { position: absolute; width: 0; height: 0; }

/* title and menus */
.titlebar, .menubar, .dialog { font-family: "Open Sans", "Noto Sans", sans-serif; }
.titlebar { display: flex; align-items: center; height: 30px; padding: 0 3px; background: #fff; color: #8c8c8c; }
.titlebar h1 { margin-left: 4px; font-size: 14px; line-height: 20px; }
.window-buttons { display: flex; margin-left: auto; }
.window-buttons button { width: 56px; height: 28px; display: grid; place-items: center; }
.menubar { display: flex; gap: 18px; height: 24px; padding: 0 8px; background: #fff; font-size: 14px; line-height: 22px; }

/* toolbar */
.toolbar { display: flex; align-items: center; height: 43px; padding-left: 1px; border-top: 1px solid #e6e6e6; border-bottom: 2px solid #a6a6a6; background: #f0f0f0; }
.tools { display: flex; }
.tools + .tools { margin-left: 21px; }
.tools + .wide-gap { margin-left: 22px; }
.tools button { width: 40px; height: 39px; display: grid; place-items: center; }
.tools svg { width: 26px; height: 26px; }
.tools svg.large { width: 30px; height: 30px; }
.tools .pressed { background: #bcdcf2; border: 1px solid #99c9ef; }
.tools .caret { width: 14px; }
.tools .caret svg { width: 10px; height: 6px; }
.separator { width: 7px; height: 36px; margin: 0 3px; border: solid #9a9a9a; border-width: 0 1px; }
.separator.tight { margin: 0 2px; }

/* work area */
.workspace { flex: 1; display: flex; }
.viewport { flex: 1; position: relative; min-width: 0; overflow: hidden; background: linear-gradient(#fefefe, #979797); }
.model { position: absolute; left: 420px; top: 193px; width: 640px; height: 490px; }
.axes { position: absolute; left: 0; bottom: 92px; }
.axes text { font: 16px "Noto Sans", sans-serif; fill: #444; }
.splitter { width: 8px; display: grid; place-items: center; border-right: 2px solid #fafafa; }
.context-strip { width: 27px; padding-top: 12px; border-right: 1px solid #fafafa; }
.context-strip span { display: block; margin-left: 4px; writing-mode: vertical-rl; }
.sidebar { width: 409px; display: flex; flex-direction: column; padding: 2px 3px 0 0; border-bottom: 2px solid #a0a0a0; border-right: 2px solid #b5b5b5; }

/* object tree */
.tree { flex: 1; margin: 0; padding: 2px 2px 0 0; list-style: none; background: #fff; border: 2px solid #9a9a9a; border-width: 2px 1px 1px 2px; font: 14px/22px "Open Sans", "Noto Sans", sans-serif; }
.node { display: flex; align-items: center; height: 22px; padding-right: 1px; }
.node.selected { background: #efefef; }
.node .kind { width: 20px; height: 20px; margin-right: 3px; }
.node strong, .node span { flex: 1; padding-left: 4px; font-weight: 400; }
.node strong { font-weight: 700; }
.mini { width: 20px; display: grid; place-items: center; }
.close-up { margin-left: 3px; }

/* tabbed panel */
.panel { padding: 3px 5px 11px 7px; }
.tabs { display: flex; align-items: flex-end; height: 26px; }
.tab { min-width: 50px; height: 23px; padding: 0 6px; border: 1px solid #dcdcdc; border-width: 1px 1px 0 0; white-space: nowrap; }
.tab.active { height: 26px; background: #fff; border-left-width: 1px; }
.page { height: 399px; margin-right: 2px; padding: 4px 4px; background: #fff; border: 1px solid #dcdcdc; border-top-color: #fff; }
fieldset { margin: 0; border: 1px solid #dcdcdc; min-width: 0; padding: 0 14px 0 11px; }
legend { margin-left: -4px; padding: 0 3px; height: 14px; line-height: 14px; }
.statistics { height: 138px; }
.visualization { height: 150px; margin-top: 3px; }
.surface { height: 58px; margin-top: 11px; }
.stats { display: grid; grid-template-columns: 70px 61px 129px 91px; row-gap: 3px; align-items: center; font-size: 13px; }
.stats .second { padding-left: 19px; white-space: nowrap; }
.stats input { width: 100%; height: 27px; padding: 0 7px 3px; border: 1px solid #767676; background: #fff; }
.stats .alert { color: #e81123; }
.update-row { display: flex; align-items: center; gap: 92px; margin-top: 4px; }
.update-row .push { width: 165px; height: 23px; }
.update-row .check { font-size: 13px; }
.push { background: #e1e1e1; border: 1px solid #adadad; }
.check { display: flex; align-items: center; gap: 4px; white-space: nowrap; }
.check input { appearance: none; width: 16px; height: 16px; border: 1px solid #333; background: #fff; display: grid; place-items: center; }
.check input:checked::before { content: ""; width: 11px; height: 6px; margin-bottom: 3px; border: solid #333; border-width: 0 0 1px 1px; rotate: -45deg; }
.checks { display: grid; grid-template-columns: 179px 1fr; padding-top: 8px; font-size: 13px; }
.slider-row { display: flex; align-items: flex-start; height: 34px; }
.slider-row label { width: 131px; padding-top: 4px; white-space: nowrap; }
.slider-row output { margin-left: auto; padding-top: 4px; font-size: 13px; }
.checks + .slider-row { margin-top: 6px; }
.slider { width: 184px; }
.slider input { appearance: none; display: block; width: 100%; height: 24px; background: none; }
.slider input::-webkit-slider-runnable-track { height: 16px; background: #e7eaea; border: 1px solid #d6d6d6; }
.slider input::-webkit-slider-thumb { appearance: none; width: 14px; height: 24px; margin-top: -4px; background: #0078d7; clip-path: polygon(0 0, 100% 0, 100% 70%, 50% 100%, 0 70%); }
.ticks { width: 170px; height: 4px; margin: 3px 0 0 7px; overflow: visible; }
.faces { margin-top: 12px; }
.panel-actions { display: grid; grid-template-columns: 164px 1fr; gap: 11px; margin-top: 9px; }
.panel-actions .push { height: 29px; }

/* repair dialog */
.dialog { position: absolute; left: 768px; top: 309px; width: 370px; background: #f0f0f0; border: 1px solid #5c87ad; border-width: 1px 0 0 1px; box-shadow: 0 4px 16px rgb(0 0 0 / 45%); }
.dialog-title { display: flex; align-items: center; height: 32px; padding: 0 2px 0 4px; background: #fff; }
.dialog-title h2 { margin-left: 5px; font-size: 14px; line-height: 20px; }
.dialog-body { padding: 10px 9px 10px 10px; font-size: 13px; }
.dialog select { display: block; width: 100%; height: 111px; padding: 2px; overflow: hidden; border: 1px solid #828790; border-radius: 0; background: #fff; outline: 0; }
.dialog option { height: 16px; min-height: 16px; padding: 0 1px; line-height: 16px; display: flex; align-items: center; }
.dialog option.chosen { background: #3399ff; color: #fff; }
.dialog-actions { display: grid; grid-template-columns: 1fr 1fr; gap: 10px; padding: 9px 1px 0; }
.dialog-actions .push { height: 29px; }

/* status line */
.statusbar { display: flex; align-items: center; height: 29px; padding-right: 34px; }
.mode { width: 271px; padding-left: 26px; border-right: 1px solid #d7d7d7; line-height: 29px; }
.hint { width: 625px; padding-left: 5px; border-right: 1px solid #d7d7d7; line-height: 29px; }
.progress { flex: 1; height: 15px; margin-left: 34px; background: #e6e6e6; border: 1px solid #bcbcbc; }

/* taskbar */
.taskbar { display: flex; height: 49px; background: linear-gradient(#050604, #0d0f07); color: #fff; }
.apps { display: flex; margin-left: 2px; }
.taskbar button { width: 60px; display: grid; place-items: center; }
.taskbar .app { width: 62px; position: relative; }
.taskbar .app.running::after { content: ""; position: absolute; bottom: 0; left: 5px; right: 5px; height: 3px; background: #a9b7e8; }
.taskbar .app.current { background: #383a34; }
.taskbar .app.current::after { left: 0; right: 0; }
.taskbar .app.grouped::after { border-right: 10px solid #6c7594; }
.tray { display: flex; align-items: center; margin-left: auto; font: 14px/20px "Open Sans", "Noto Sans", sans-serif; }
.taskbar .tray button { width: 30px; height: 100%; }
.taskbar .tray .language { width: 44px; }
.tray time { width: 97px; padding-bottom: 3px; text-align: center; }
.taskbar .tray .show-desktop { width: 5px; border-left: 1px solid #666; }
```
